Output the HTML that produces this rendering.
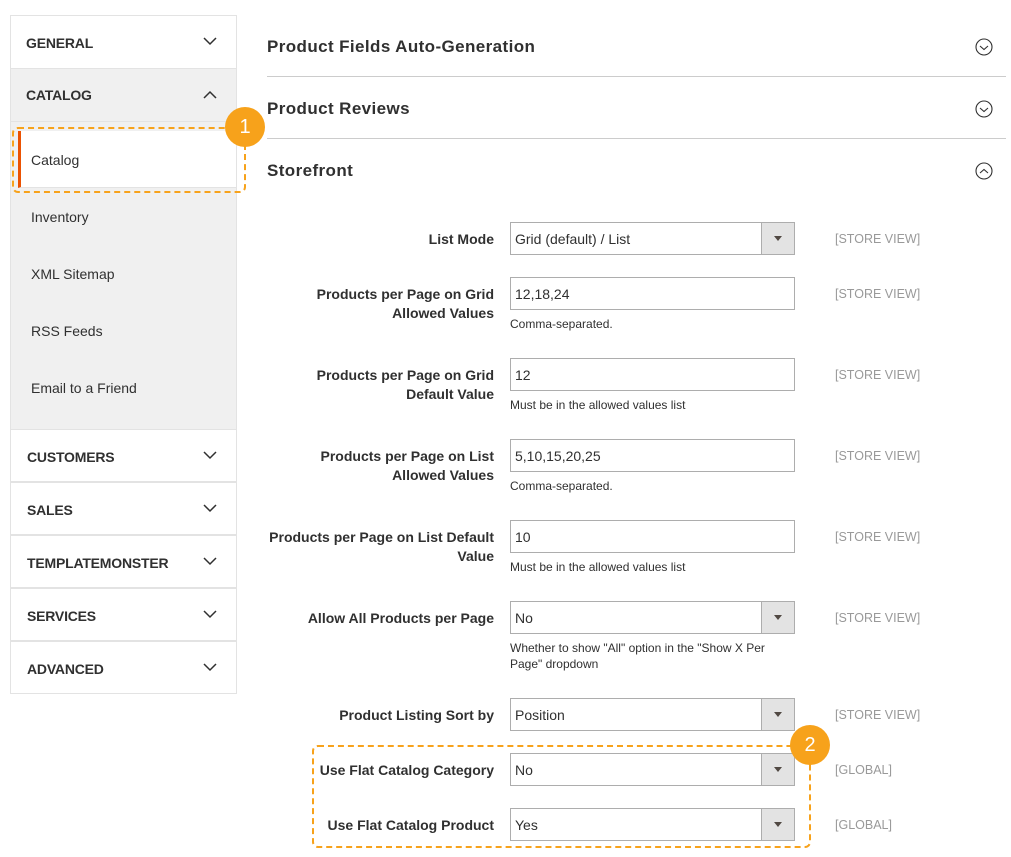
<!DOCTYPE html>
<html><head><style>
*{margin:0;padding:0;box-sizing:border-box}
body{width:1011px;height:857px;background:#fff;font-family:"Liberation Sans",sans-serif;color:#303030;position:relative;overflow:hidden}
.a{position:absolute}
.h{position:absolute;left:10px;width:227px;height:53px;border:1px solid #e3e3e3;border-top:none;font-weight:bold;font-size:14px;padding-left:16px;line-height:54px;color:#303030;letter-spacing:-0.2px}
.item{position:absolute;left:31px;font-size:14px;color:#303030}
.sec{position:absolute;left:267px;font-size:17px;font-weight:bold;color:#303030;letter-spacing:0.4px}
.line{position:absolute;left:267px;width:739px;height:1px;background:#ccc}
.lbl{position:absolute;right:517px;text-align:right;font-size:14px;font-weight:bold;line-height:19px;color:#303030}
.in{position:absolute;left:510px;width:285px;height:33px;border:1px solid #adadad;font-size:14px;line-height:33px;padding-left:4px;background:#fff}
.sel .btn{position:absolute;right:0;top:0;width:33px;height:31px;background:#e3e3e3;border-left:1px solid #adadad}
.sel .btn:after{content:"";position:absolute;left:12px;top:13px;border-left:4px solid transparent;border-right:4px solid transparent;border-top:5px solid #514943}
.note{position:absolute;left:510px;font-size:12px;color:#303030;line-height:16px}
.sc{position:absolute;left:835px;font-size:12.5px;color:#999}
.badge{position:absolute;width:40px;height:40px;border-radius:50%;background:#f7a21b;color:#fff;font-size:20px;text-align:center;line-height:40px}
.dash{position:absolute;border:2px dashed #f7a21b;border-radius:6px}
</style></head><body>
<div class="a" style="left:10px;top:15px;width:227px;height:54px;border:1px solid #e3e3e3"></div>
<div class="a" style="left:26px;top:16px;line-height:54px;font-weight:bold;font-size:14px;letter-spacing:-0.2px">GENERAL</div>
<svg class="a" style="left:203px;top:37px" width="14" height="9"><path d="M1 1l6 6 6-6" stroke="#303030" stroke-width="1.5" fill="none"/></svg>
<div class="a" style="left:10px;top:68px;width:227px;height:362px;background:#f0f0f0;border:1px solid #e3e3e3"></div>
<div class="a" style="left:26px;top:69px;line-height:53px;font-weight:bold;font-size:14px;letter-spacing:-0.2px">CATALOG</div>
<svg class="a" style="left:203px;top:90px" width="14" height="9"><path d="M1 8l6-6 6 6" stroke="#303030" stroke-width="1.5" fill="none"/></svg>
<div class="a" style="left:11px;top:121px;width:225px;height:1px;background:#e3e3e3"></div>
<div class="a" style="left:18px;top:131px;width:218px;height:57px;background:#fff;border-left:3px solid #eb5202;border-bottom:1px solid #e3e3e3"></div>
<div class="item" style="top:152px">Catalog</div>
<div class="item" style="top:209px">Inventory</div>
<div class="item" style="top:266px">XML Sitemap</div>
<div class="item" style="top:323px">RSS Feeds</div>
<div class="item" style="top:380px">Email to a Friend</div>
<div class="h" style="top:429px;border-top:1px solid #e3e3e3">CUSTOMERS</div>
<div class="h" style="top:482px;border-top:1px solid #e3e3e3">SALES</div>
<div class="h" style="top:535px;border-top:1px solid #e3e3e3">TEMPLATEMONSTER</div>
<div class="h" style="top:588px;border-top:1px solid #e3e3e3">SERVICES</div>
<div class="h" style="top:641px;border-top:1px solid #e3e3e3">ADVANCED</div>
<svg class="a" style="left:203px;top:451px" width="14" height="270"><g stroke="#303030" stroke-width="1.5" fill="none"><path d="M1 1l6 6 6-6"/><path d="M1 54l6 6 6-6"/><path d="M1 107l6 6 6-6"/><path d="M1 160l6 6 6-6"/><path d="M1 213l6 6 6-6"/></g></svg>
<div class="dash" style="left:12px;top:127px;width:234px;height:66px"></div>
<div class="badge" style="left:225px;top:107px">1</div>

<div class="sec" style="top:37px">Product Fields Auto-Generation</div>
<div class="line" style="top:76px"></div>
<div class="sec" style="top:99px">Product Reviews</div>
<div class="line" style="top:138px"></div>
<div class="sec" style="top:161px">Storefront</div>
<svg class="a" style="left:974px;top:37px" width="20" height="145"><g stroke="#303030" stroke-width="1.1" fill="none"><circle cx="10" cy="10" r="8"/><path d="M6 9l4 3.5 4-3.5"/><circle cx="10" cy="72" r="8"/><path d="M6 71l4 3.5 4-3.5"/><circle cx="10" cy="134" r="8"/><path d="M6 136l4-3.5 4 3.5"/></g></svg>

<div class="lbl" style="top:230px">List Mode</div>
<div class="in sel" style="top:222px">Grid (default) / List<div class="btn"></div></div>
<div class="sc" style="top:232px">[STORE VIEW]</div>

<div class="lbl" style="top:285px">Products per Page on Grid<br>Allowed Values</div>
<div class="in" style="top:277px">12,18,24</div>
<div class="note" style="top:316px">Comma-separated.</div>
<div class="sc" style="top:287px">[STORE VIEW]</div>

<div class="lbl" style="top:366px">Products per Page on Grid<br>Default Value</div>
<div class="in" style="top:358px">12</div>
<div class="note" style="top:397px">Must be in the allowed values list</div>
<div class="sc" style="top:368px">[STORE VIEW]</div>

<div class="lbl" style="top:447px">Products per Page on List<br>Allowed Values</div>
<div class="in" style="top:439px">5,10,15,20,25</div>
<div class="note" style="top:478px">Comma-separated.</div>
<div class="sc" style="top:449px">[STORE VIEW]</div>

<div class="lbl" style="top:528px">Products per Page on List Default<br>Value</div>
<div class="in" style="top:520px">10</div>
<div class="note" style="top:559px">Must be in the allowed values list</div>
<div class="sc" style="top:530px">[STORE VIEW]</div>

<div class="lbl" style="top:609px">Allow All Products per Page</div>
<div class="in sel" style="top:601px">No<div class="btn"></div></div>
<div class="note" style="top:640px;width:280px">Whether to show "All" option in the "Show X Per Page" dropdown</div>
<div class="sc" style="top:611px">[STORE VIEW]</div>

<div class="lbl" style="top:706px">Product Listing Sort by</div>
<div class="in sel" style="top:698px">Position<div class="btn"></div></div>
<div class="sc" style="top:708px">[STORE VIEW]</div>

<div class="lbl" style="top:761px">Use Flat Catalog Category</div>
<div class="in sel" style="top:753px">No<div class="btn"></div></div>
<div class="sc" style="top:763px">[GLOBAL]</div>

<div class="lbl" style="top:816px">Use Flat Catalog Product</div>
<div class="in sel" style="top:808px">Yes<div class="btn"></div></div>
<div class="sc" style="top:818px">[GLOBAL]</div>

<div class="dash" style="left:312px;top:745px;width:499px;height:103px"></div>
<div class="badge" style="left:790px;top:725px">2</div>
</body></html>
